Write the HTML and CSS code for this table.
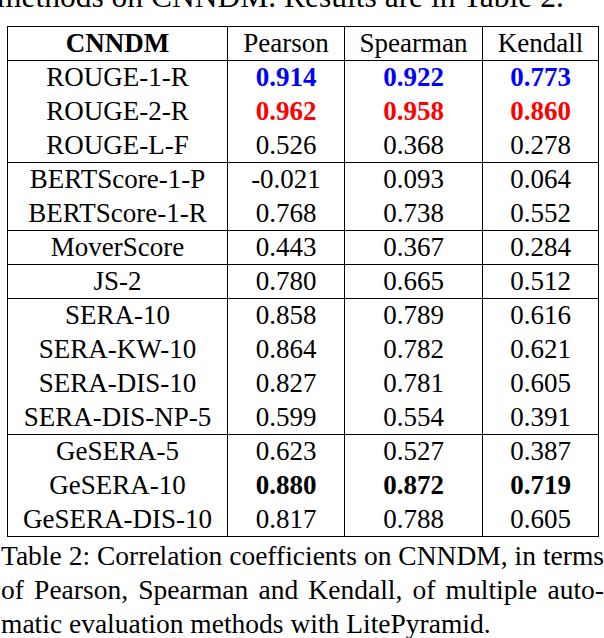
FILE: index.html
```html
<!DOCTYPE html>
<html>
<head>
<meta charset="utf-8">
<link rel="stylesheet" href="styles.css">
</head>
<body>
<div class="page">
  <p class="prev">methods on CNNDM. Results are in Table 2.</p>
  <table class="results">
    <thead>
      <tr><th class="c-name">CNNDM</th><td class="c-p">Pearson</td><td class="c-s">Spearman</td><td class="c-k">Kendall</td></tr>
    </thead>
    <tbody>
      <tr><td>ROUGE-1-R</td><td class="best1">0.914</td><td class="best1">0.922</td><td class="best1">0.773</td></tr>
      <tr><td>ROUGE-2-R</td><td class="best0">0.962</td><td class="best0">0.958</td><td class="best0">0.860</td></tr>
      <tr><td>ROUGE-L-F</td><td>0.526</td><td>0.368</td><td>0.278</td></tr>
    </tbody>
    <tbody>
      <tr><td>BERTScore-1-P</td><td>-0.021</td><td>0.093</td><td>0.064</td></tr>
      <tr><td>BERTScore-1-R</td><td>0.768</td><td>0.738</td><td>0.552</td></tr>
    </tbody>
    <tbody>
      <tr><td>MoverScore</td><td>0.443</td><td>0.367</td><td>0.284</td></tr>
    </tbody>
    <tbody>
      <tr><td>JS-2</td><td>0.780</td><td>0.665</td><td>0.512</td></tr>
    </tbody>
    <tbody>
      <tr><td>SERA-10</td><td>0.858</td><td>0.789</td><td>0.616</td></tr>
      <tr><td>SERA-KW-10</td><td>0.864</td><td>0.782</td><td>0.621</td></tr>
      <tr><td>SERA-DIS-10</td><td>0.827</td><td>0.781</td><td>0.605</td></tr>
      <tr><td>SERA-DIS-NP-5</td><td>0.599</td><td>0.554</td><td>0.391</td></tr>
    </tbody>
    <tbody>
      <tr><td>GeSERA-5</td><td>0.623</td><td>0.527</td><td>0.387</td></tr>
      <tr><td>GeSERA-10</td><td class="bold">0.880</td><td class="bold">0.872</td><td class="bold">0.719</td></tr>
      <tr><td>GeSERA-DIS-10</td><td>0.817</td><td>0.788</td><td>0.605</td></tr>
    </tbody>
  </table>
  <div class="caption">
    <div class="cline">Table 2: Correlation coefficients on CNNDM, in terms</div>
    <div class="cline">of Pearson, Spearman and Kendall, of multiple auto-</div>
    <div class="cline last">matic evaluation methods with LitePyramid.</div>
  </div>
</div>
</body>
</html>
```

FILE: styles.css
```css
html, body {
  margin: 0;
  padding: 0;
  background: #fff;
}
body {
  width: 604px;
  height: 638px;
  overflow: hidden;
  font-family: "Liberation Serif", "Times New Roman", serif;
  font-size: 27px;
  line-height: 34px;
  color: #000;
}
.page {
  display: flex;
  flex-direction: column;
}
.prev {
  margin: -20px 0 0 -3px;
  height: 34px;
  font-size: 31.5px;
  white-space: nowrap;
}
.results {
  margin: 12px 0 0 7px;
  border-collapse: separate;
  border-spacing: 0;
  border: 1px solid #000;
  box-sizing: border-box;
  width: 592px;
  table-layout: fixed;
  line-height: 30px;
}
.results th, .results td {
  box-sizing: border-box;
  padding: 0 0 1px;
  height: 34px;
  text-align: center;
  vertical-align: middle;
  border-left: 1px solid #000;
  white-space: nowrap;
  font-weight: normal;
}
.results tr > :first-child { border-left: 0; }
.results thead th, .results thead td { height: 33px; }
.results thead th { font-weight: bold; }
.results tbody tr:first-child td { border-top: 1px solid #000; }
.c-name { width: 219px; }
.c-p { width: 117px; }
.c-s { width: 138px; }
.c-k { width: 116px; }
.results td.best1 { color: #0000ff; font-weight: bold; }
.results td.best0 { color: #ff0000; font-weight: bold; }
.results td.bold { font-weight: bold; }
.caption {
  margin: 2px 0 0 1px;
  width: 603px;
  font-size: 27.5px;
}
.cline {
  text-align: justify;
  text-align-last: justify;
  white-space: nowrap;
}
.cline.last {
  text-align-last: left;
}
```
